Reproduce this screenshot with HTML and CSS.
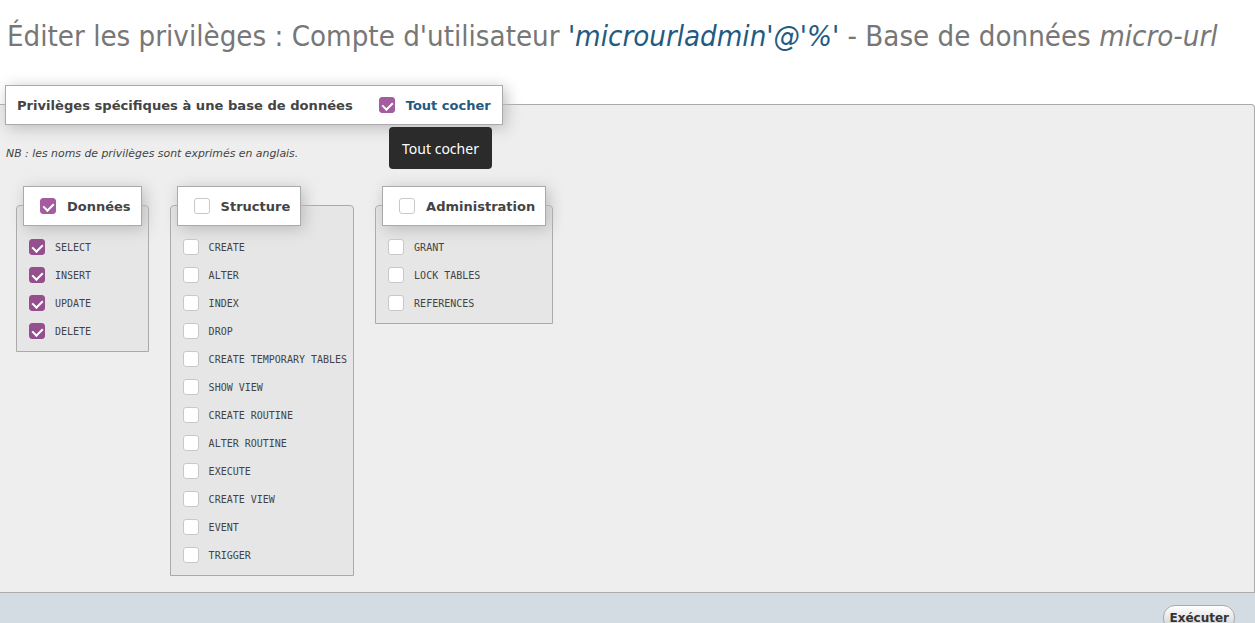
FILE: index.html
```html
<!DOCTYPE html>
<html lang="fr">
<head>
<meta charset="utf-8">
<title>Éditer les privilèges</title>
<link rel="stylesheet" href="styles.css">
</head>
<body>
<h2 class="page-title">Éditer les privilèges : Compte d'utilisateur <i class="user">'microurladmin'@'%'</i> - Base de données <i>micro-url</i></h2>

<div class="main">
  <div class="main-legend">
    <span class="legend-text">Privilèges spécifiques à une base de données</span>
    <span class="cb checked"></span>
    <a class="check-all" href="#">Tout cocher</a>
  </div>
  <p class="nb">NB : les noms de privilèges sont exprimés en anglais.</p>

  <div class="groups">
    <div class="group">
      <div class="group-legend"><span class="cb checked"></span><span>Données</span></div>
      <ul class="items">
        <li><span class="cb checked"></span>SELECT</li>
        <li><span class="cb checked"></span>INSERT</li>
        <li><span class="cb checked"></span>UPDATE</li>
        <li><span class="cb checked"></span>DELETE</li>
      </ul>
    </div>
    <div class="group">
      <div class="group-legend"><span class="cb"></span><span>Structure</span></div>
      <ul class="items">
        <li><span class="cb"></span>CREATE</li>
        <li><span class="cb"></span>ALTER</li>
        <li><span class="cb"></span>INDEX</li>
        <li><span class="cb"></span>DROP</li>
        <li><span class="cb"></span>CREATE TEMPORARY TABLES</li>
        <li><span class="cb"></span>SHOW VIEW</li>
        <li><span class="cb"></span>CREATE ROUTINE</li>
        <li><span class="cb"></span>ALTER ROUTINE</li>
        <li><span class="cb"></span>EXECUTE</li>
        <li><span class="cb"></span>CREATE VIEW</li>
        <li><span class="cb"></span>EVENT</li>
        <li><span class="cb"></span>TRIGGER</li>
      </ul>
    </div>
    <div class="group">
      <div class="group-legend"><span class="cb"></span><span>Administration</span></div>
      <ul class="items">
        <li><span class="cb"></span>GRANT</li>
        <li><span class="cb"></span>LOCK TABLES</li>
        <li><span class="cb"></span>REFERENCES</li>
      </ul>
    </div>
  </div>

  <div class="tooltip">Tout cocher</div>
</div>

<div class="footer">
  <button class="btn" type="button">Exécuter</button>
</div>
</body>
</html>
```

FILE: styles.css
```css
html, body {
  margin: 0;
  padding: 0;
  background: #fff;
}
body {
  font-family: "DejaVu Sans", sans-serif;
  color: #444;
  overflow: hidden;
  height: 623px;
}
.page-title {
  margin: 0;
  padding: 18px 0 0 7px;
  height: 68px;
  box-sizing: border-box;
  font-family: "DejaVu Sans Condensed", "DejaVu Sans", sans-serif;
  font-weight: normal;
  font-size: 29.2px;
  line-height: 36px;
  color: #777;
  white-space: nowrap;
}
.page-title i { color: #777; }
.page-title i.user { color: #235a81; }

.main {
  position: relative;
  margin-top: 36px;
  background: #eee;
  border: 1px solid #aaa;
  border-left: none;
  border-radius: 0 4px 0 0;
  height: 487px;
}
.main-legend {
  display: flex;
  align-items: center;
  width: fit-content;
  margin: -20px 0 0 5px;
  height: 38px;
  padding: 0 11px 0 11px;
  background: #fff;
  border: 1px solid #aaa;
  box-shadow: 3px 3px 15px #bbb;
  font-size: 13.1px;
  font-weight: bold;
  white-space: nowrap;
}
.main-legend .cb {
  margin-left: 26px;
  margin-right: 11px;
}
.check-all {
  color: #235a81;
  text-decoration: none;
  font-size: 13px;
}
.nb {
  margin: 22px 0 0 6px;
  font-size: 10.9px;
  line-height: 13px;
  font-style: italic;
  color: #444;
}
.groups {
  display: flex;
  align-items: flex-start;
  gap: 21px;
  margin: 45px 0 0 16px;
}
.group {
  display: flex;
  flex-direction: column;
  align-items: flex-start;
  background: #e6e6e6;
  border: 1px solid #aaa;
  border-radius: 4px 4px 0 0;
  padding: 0 6px 12px 0;
}
.group-legend {
  display: flex;
  align-items: center;
  margin: -20px 0 0 6px;
  height: 38px;
  padding: 0 10px 0 16px;
  background: #fff;
  border: 1px solid #aaa;
  box-shadow: 3px 3px 15px #bbb;
  font-size: 13px;
  font-weight: bold;
  white-space: nowrap;
}
.group-legend .cb { margin-right: 11px; }
.items {
  list-style: none;
  margin: 13px 0 0 12px;
  padding: 0;
}
.items li {
  display: flex;
  align-items: center;
  height: 16px;
  margin-bottom: 12px;
  font-family: "DejaVu Sans Mono", monospace;
  font-size: 10px;
  color: #444;
  white-space: nowrap;
}
.items li:last-child { margin-bottom: 0; }
.items .cb { margin-right: 10px; }

.cb {
  display: inline-block;
  flex: none;
  width: 16px;
  height: 16px;
  box-sizing: border-box;
  background: #fff;
  border: 1px solid #c8c8c8;
  border-radius: 3px;
  position: relative;
}
.cb.checked {
  background: #964f8e;
  border-color: #964f8e;
}
.cb.checked::after {
  content: "";
  position: absolute;
  left: 4px;
  top: 2px;
  width: 5px;
  height: 8px;
  border: solid #fff;
  border-width: 0 2px 2px 0;
  transform: rotate(45deg);
}
.main-legend .cb.checked,
.group-legend .cb.checked {
  background: #a45ba0;
  border-color: #a45ba0;
}

.tooltip {
  position: absolute;
  left: 389px;
  top: 22px;
  width: 103px;
  height: 42px;
  box-sizing: border-box;
  display: flex;
  align-items: center;
  justify-content: center;
  background: #2b2b2b;
  color: #fff;
  border-radius: 4px;
  font-family: "Noto Sans", sans-serif;
  font-size: 14px;
}

.footer {
  background: #d3dce3;
  height: 40px;
  display: flex;
  justify-content: flex-end;
  align-items: flex-start;
  padding: 12px 20px 0 0;
  box-sizing: border-box;
}
.btn {
  font-family: "DejaVu Sans", sans-serif;
  font-weight: bold;
  font-size: 12px;
  color: #333;
  background: linear-gradient(#fff, #ccc);
  border: 1px solid #aaa;
  border-radius: 12px;
  padding: 0 5px;
  height: 26px;
}
```
